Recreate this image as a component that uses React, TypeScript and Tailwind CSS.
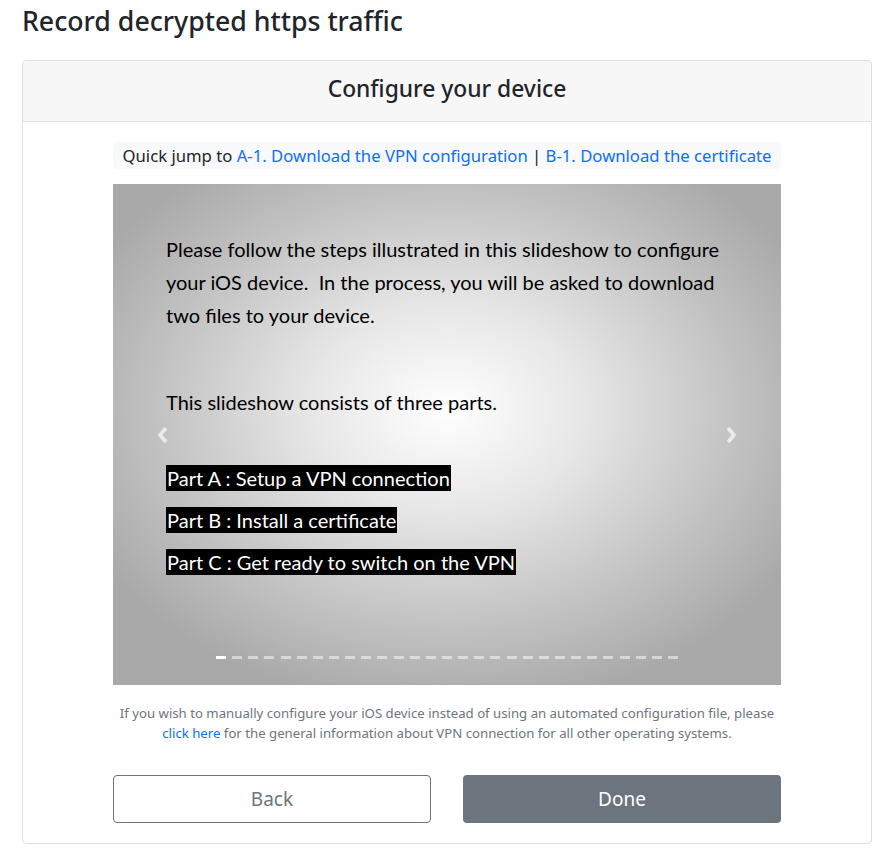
import React from "react";

const font = { fontFamily: '"Segoe UI", "Noto Sans", "Open Sans", sans-serif' };

function Indicators() {
  const items = Array.from({ length: 29 });
  return (
    <div className="absolute left-0 right-0 bottom-[26px] flex justify-center gap-[6.15px]">
      {items.map((_, i) => (
        <span
          key={i}
          className={
            "block w-[10px] h-[3px] " + (i === 0 ? "bg-white" : "bg-white/50")
          }
        />
      ))}
    </div>
  );
}

export default function App() {
  return (
    <div className="bg-white text-[#212529] w-[884px] min-h-[853px]" style={font}>
      <h1 className="pl-[22px] pt-[3px] text-[26.7px] leading-[36px] font-medium m-0">
        Record decrypted https traffic
      </h1>
      <div className="mx-[22px] mt-[21px] border border-[#dfdfdf] rounded-[4px] w-[850px]">
        <div className="h-[61px] bg-[#f7f7f7] border-b border-[#dfdfdf] flex items-center justify-center text-[22.8px] font-medium rounded-t-[4px] pb-[4px]">
          Configure your device
        </div>
        <div className="px-[90px] pt-[20px] pb-[20px]">
          <div className="bg-[#f8f9fa] rounded-[4px] h-[27px] flex items-center justify-center text-[16.7px] whitespace-nowrap">
            <span>Quick jump to&nbsp;</span>
            <a className="text-[#0d6efd]">A-1. Download the VPN configuration</a>
            <span>&nbsp;|&nbsp;</span>
            <a className="text-[#0d6efd]">B-1. Download the certificate</a>
          </div>
          <div
            className="relative mt-[15px] h-[501px] overflow-hidden"
            style={{
              background:
                "radial-gradient(ellipse 60% 60% at 50% 45%, #ffffff 0%, #e6e6e6 35%, #c4c4c4 70%, #a9a9a9 100%)",
            }}
          >
            <div
              className="pl-[53px] pt-[49px] text-[20px] text-black"
              style={{ fontFamily: 'Lato, "Noto Sans", sans-serif' }}
            >
              <p className="leading-[33px]">
                Please follow the steps illustrated in this slideshow to configure
                <br />
                your iOS device.&nbsp; In the process, you will be asked to download
                <br />
                two files to your device.
              </p>
              <p className="leading-[33px] mt-[54px]">This slideshow consists of three parts.</p>
              <div className="mt-[46px] flex flex-col items-start gap-[16px]">
                <span className="bg-black text-white leading-[26px] px-[1px]">Part A : Setup a VPN connection</span>
                <span className="bg-black text-white leading-[26px] px-[1px]">Part B : Install a certificate</span>
                <span className="bg-black text-white leading-[26px] px-[1px]">Part C : Get ready to switch on the VPN</span>
              </div>
            </div>
            <svg className="absolute left-[43px] top-[242px]" width="14" height="18" viewBox="0 0 14 18">
              <path d="M10 2 L4 9 L10 16" stroke="#ececec" strokeWidth="3.5" fill="none" />
            </svg>
            <svg className="absolute left-[611px] top-[242px]" width="14" height="18" viewBox="0 0 14 18">
              <path d="M4 2 L10 9 L4 16" stroke="#ececec" strokeWidth="3.5" fill="none" />
            </svg>
            <Indicators />
          </div>
          <p className="mt-[18px] text-center text-[13.2px] leading-[20px] text-[#6c757d]">
            If you wish to manually configure your iOS device instead of using an automated configuration file, please{" "}
            <a className="text-[#0d6efd]">click here</a> for the general information about VPN connection for all other operating systems.
          </p>
          <div className="mt-[32px] flex justify-between">
            <button className="w-[318px] h-[48px] border border-[#6c757d] rounded-[4px] text-[#6c757d] text-[19px] bg-white">
              Back
            </button>
            <button className="w-[318px] h-[48px] rounded-[4px] bg-[#6c757d] text-white text-[19px]">
              Done
            </button>
          </div>
        </div>
      </div>
    </div>
  );
}
